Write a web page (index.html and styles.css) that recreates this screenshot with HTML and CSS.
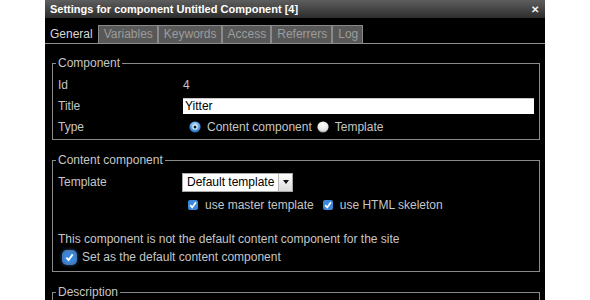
FILE: index.html
```html
<!DOCTYPE html>
<html>
<head>
<meta charset="utf-8">
<link rel="stylesheet" href="styles.css">
</head>
<body>
<div class="dialog">
  <div class="titlebar">
    <span class="title">Settings for component Untitled Component [4]</span>
    <span class="close">&#x2715;</span>
  </div>
  <div class="tabs">
    <span class="tab active">General</span>
    <span class="tab">Variables</span>
    <span class="tab">Keywords</span>
    <span class="tab">Access</span>
    <span class="tab">Referrers</span>
    <span class="tab">Log</span>
  </div>
  <div class="body">
    <fieldset class="group">
      <legend>Component</legend>
      <div class="row"><span class="label">Id</span><span class="value">4</span></div>
      <div class="row"><span class="label">Title</span><span class="value"><span class="input">Yitter</span></span></div>
      <div class="row"><span class="label">Type</span>
        <span class="value options">
          <span class="radio on"><svg width="12" height="12" viewBox="0 0 12 12"><defs><radialGradient id="rb" cx="50%" cy="35%" r="65%"><stop offset="0" stop-color="#cfe6fb"/><stop offset="0.6" stop-color="#5aa2e8"/><stop offset="1" stop-color="#1f5fae"/></radialGradient></defs><circle cx="6" cy="6" r="5.6" fill="url(#rb)"/><circle cx="6" cy="6" r="2.6" fill="#e8f3fd"/><circle cx="6" cy="6" r="1.5" fill="#0d1a2a"/></svg></span>
          <span class="opt-text">Content component</span>
          <span class="radio off"><svg width="12" height="12" viewBox="0 0 12 12"><defs><radialGradient id="rw" cx="50%" cy="30%" r="70%"><stop offset="0" stop-color="#ffffff"/><stop offset="0.7" stop-color="#e6e6e6"/><stop offset="1" stop-color="#9a9a9a"/></radialGradient></defs><circle cx="6" cy="6" r="5.6" fill="url(#rw)"/></svg></span>
          <span class="opt-text">Template</span>
        </span>
      </div>
    </fieldset>

    <fieldset class="group content">
      <legend>Content component</legend>
      <div class="row tall"><span class="label">Template</span>
        <span class="value"><span class="select"><span class="sel-text">Default template</span><span class="sel-arrow"><svg width="6" height="4" viewBox="0 0 6 4"><path d="M0 0H6L3 4Z" fill="#111"/></svg></span></span></span>
      </div>
      <div class="row checks">
        <span class="check"><svg width="10" height="10" viewBox="0 0 10 10"><rect x="0" y="0" width="10" height="10" rx="2" fill="#3b87d9"/><path d="M2.2 5.2L4.2 7.4L7.9 2.2" stroke="#fff" stroke-width="1.8" fill="none"/></svg></span>
        <span class="opt-text">use master template</span>
        <span class="check second"><svg width="10" height="10" viewBox="0 0 10 10"><rect x="0" y="0" width="10" height="10" rx="2" fill="#3b87d9"/><path d="M2.2 5.2L4.2 7.4L7.9 2.2" stroke="#fff" stroke-width="1.8" fill="none"/></svg></span>
        <span class="opt-text">use HTML skeleton</span>
      </div>
      <p class="note">This component is not the default content component for the site</p>
      <div class="row default">
        <span class="check focus"><svg width="11" height="11" viewBox="0 0 11 11"><rect x="0" y="0" width="11" height="11" rx="2" fill="#3b87d9"/><path d="M2.4 5.6L4.6 8.1L8.7 2.4" stroke="#fff" stroke-width="1.9" fill="none"/></svg></span>
        <span class="opt-text">Set as the default content component</span>
      </div>
    </fieldset>

    <fieldset class="group">
      <legend>Description</legend>
      <div class="desc"></div>
    </fieldset>
  </div>
</div>
</body>
</html>
```

FILE: styles.css
```css
html, body {
  margin: 0;
  background: #fff;
}
body {
  font-family: "Liberation Sans", Arial, Helvetica, sans-serif;
  font-size: 12px;
}
.dialog {
  margin-left: 45px;
  width: 500px;
  height: 300px;
  background: #000;
  overflow: hidden;
}
.titlebar {
  height: 18px;
  box-sizing: border-box;
  background: linear-gradient(#5e5e5e, #2c2c2c);
  display: flex;
  align-items: center;
  justify-content: space-between;
  padding: 0 6px 0 5px;
  color: #fff;
}
.title {
  font-weight: bold;
  font-size: 11px;
}
.close {
  font-size: 10px;
  font-weight: bold;
  color: #f0f0f0;
}
.tabs {
  display: flex;
  padding-top: 7px;
  border-bottom: 1px solid #8c8c8c;
}
.tab {
  box-sizing: border-box;
  height: 18px;
  line-height: 17px;
  padding: 0 4px 0 5px;
  border: 1px solid #8a8a8a;
  border-bottom: none;
  background: #585858;
  color: #9c9c9c;
}
.tab.active {
  padding: 0 4px;
  background: #000;
  border-color: transparent;
  color: #d8d8d8;
}
.body {
  padding: 12px 5px 0 7px;
}
.group {
  margin: 0 0 13px;
  border: 1px solid #8a8a8a;
  padding: 4px 6px 2px 3px;
  min-width: 0;
  color: #c6c6c6;
}
.group legend {
  padding: 0 2px;
  line-height: 14px;
  color: #c6c6c6;
}
.row {
  display: flex;
  align-items: center;
  height: 21px;
  padding-left: 2px;
}
.label {
  width: 125px;
  flex: none;
}
.value {
  display: flex;
  align-items: center;
  flex: 1;
}
.input {
  display: block;
  width: 351px;
  height: 16px;
  box-sizing: border-box;
  background: #fff;
  border-top: 1px solid #c8c8c8;
  color: #000;
  line-height: 15px;
  padding-left: 2px;
}
.options .radio {
  display: flex;
  margin-left: 6px;
}
.options .radio.off {
  margin-left: 5px;
}
.opt-text {
  margin-left: 7px;
}
.options .opt-text {
  margin-left: 6px;
}
.content {
  padding-bottom: 6px;
}
.row.tall {
  height: 22px;
}
.select {
  display: flex;
  margin-left: -1px;
  width: 111px;
  height: 19px;
  box-sizing: border-box;
  border: 1px solid #a8a8a8;
  background: #fff;
  color: #000;
}
.sel-text {
  flex: 1;
  padding-left: 4px;
  line-height: 17px;
}
.sel-arrow {
  width: 13px;
  border-left: 1px solid #b8b8b8;
  background: linear-gradient(#fdfdfd, #dcdcdc);
  display: flex;
  align-items: center;
  justify-content: center;
}
.row.checks {
  height: 24px;
  padding-left: 132px;
}
.check {
  display: flex;
}
.check.second {
  margin-left: 9px;
}
.note {
  margin: 15px 0 0 2px;
  line-height: 14px;
}
.row.default {
  height: 16px;
  margin-top: 3px;
  padding-left: 8px;
}
.check.focus {
  border-radius: 3px;
  box-shadow: 0 0 0 2px rgba(90, 150, 220, 0.75), 0 0 3px 3px rgba(60, 120, 200, 0.4);
}
.row.default .opt-text {
  margin-left: 7px;
}
.desc {
  height: 20px;
}
```
